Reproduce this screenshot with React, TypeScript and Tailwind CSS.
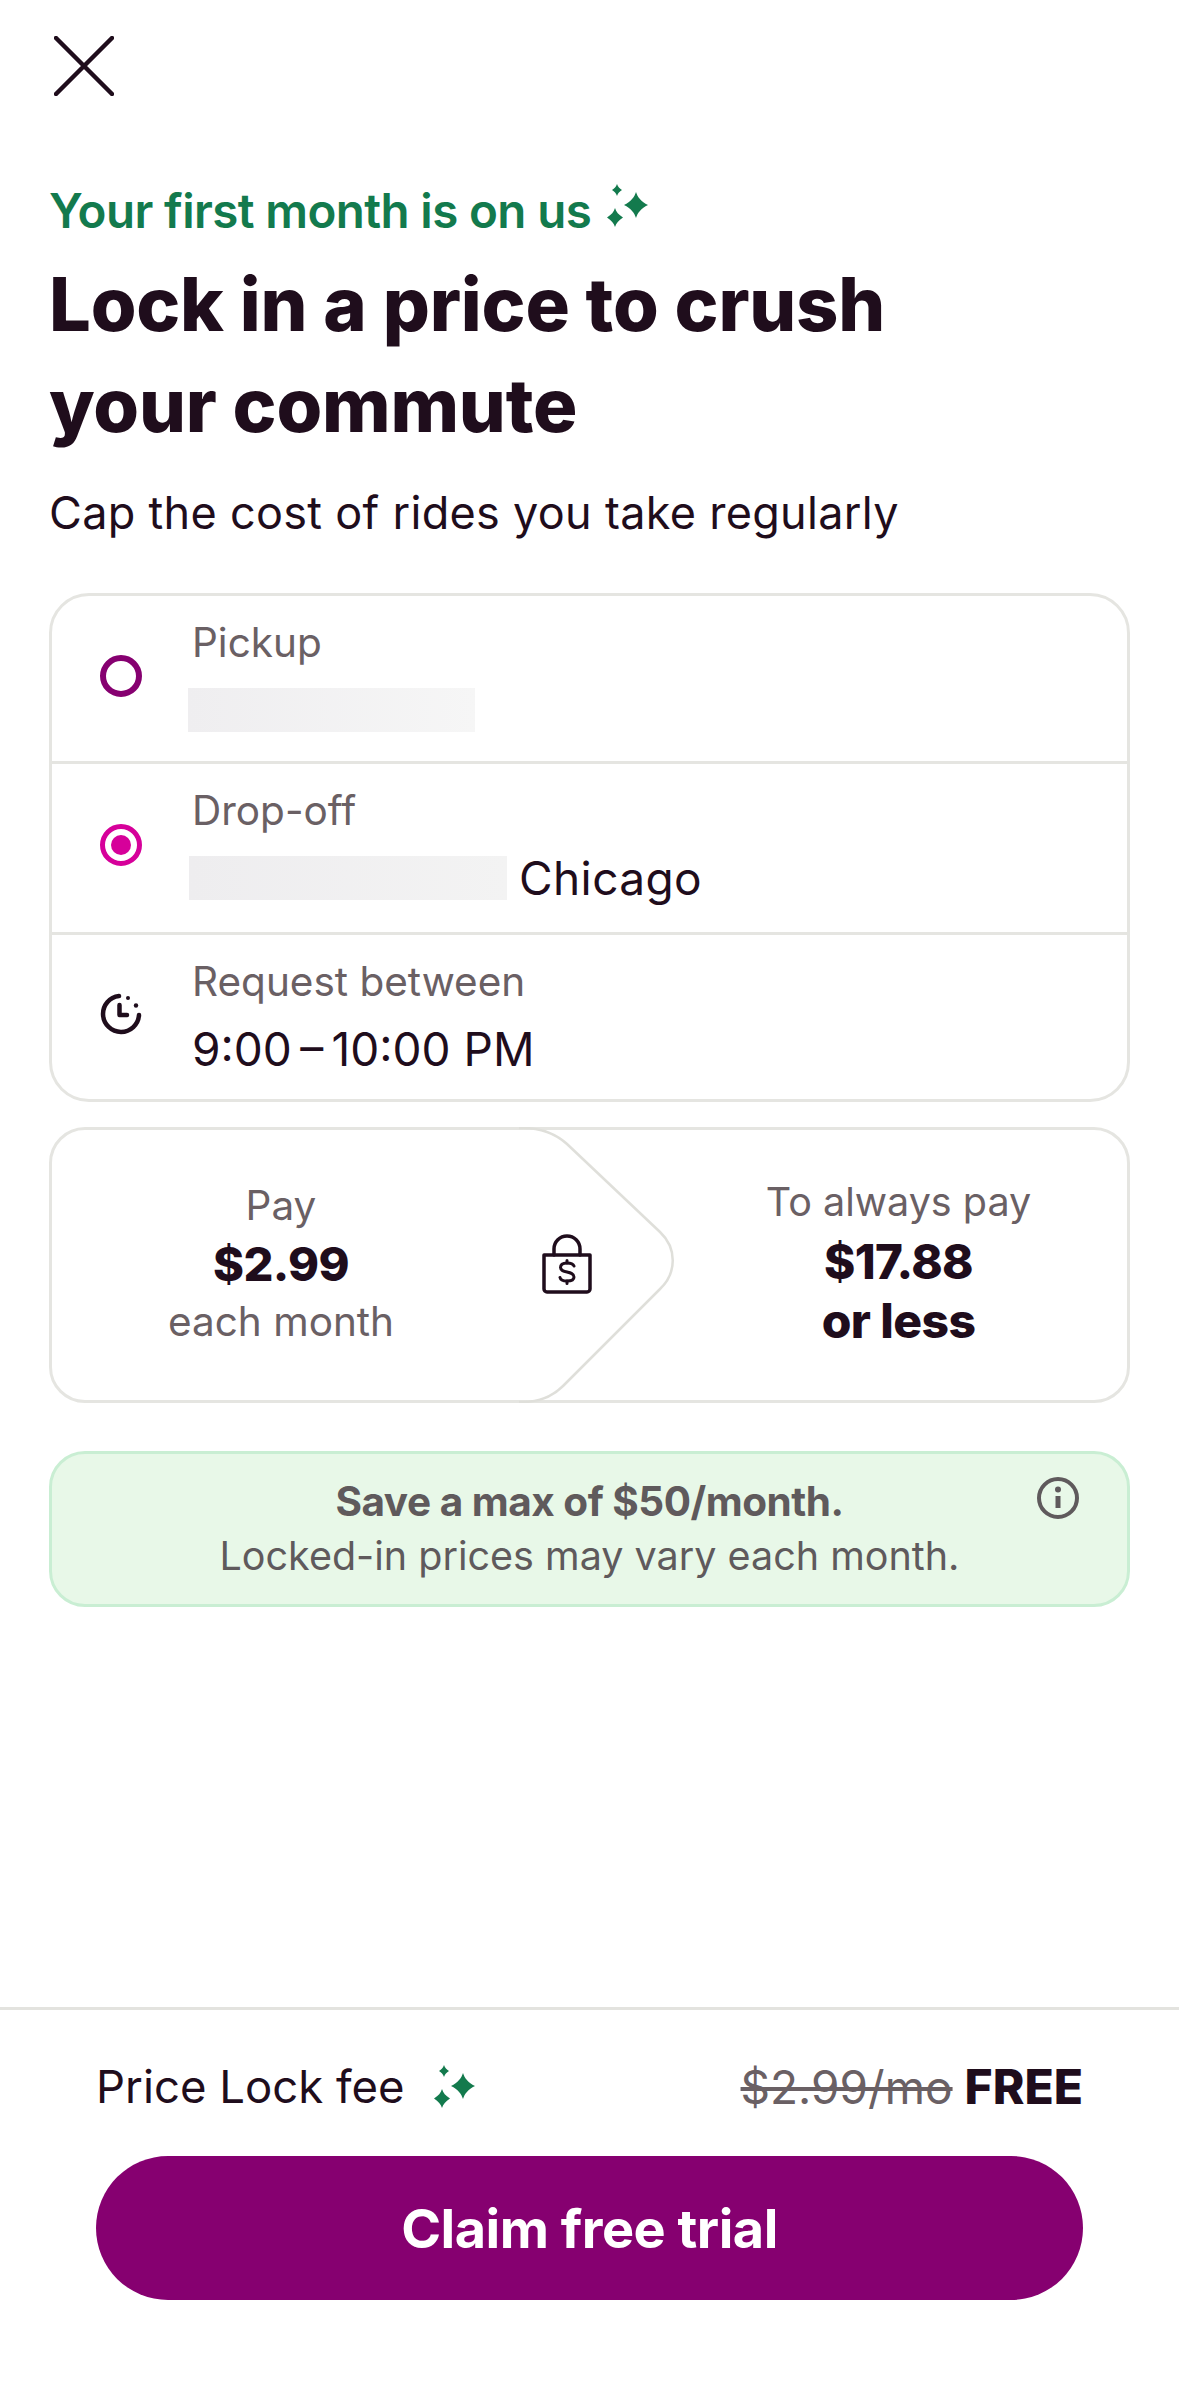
import React from 'react';

const Sparkles: React.FC<{ className?: string }> = ({ className }) => (
  <svg viewBox="0 0 44 44" className={className} fill="#137a4d">
    <path d="M12 0 C13 3 14.500 4.500 17 6 C14.500 7.500 13 9 12 12 C11 9 9.500 7.500 7 6 C9.500 4.500 11 3 12 0Z" />
    <path d="M31 8 C32.500 13 36 17.500 43 21 C36 24.500 32.500 29 31 34 C29.500 29 26 24.500 19 21 C26 17.500 29.500 13 31 8Z" />
    <path d="M10 24 C11.200 28 13.500 30.500 18 33.500 C13.500 36.500 11.200 39 10 43 C8.800 39 6.500 36.500 2 33.500 C6.500 30.500 8.800 28 10 24Z" />
  </svg>
);

const ClockIcon = () => (
  <svg viewBox="0 0 42 42" className="h-[42px] w-[42px]" fill="none" stroke="#1f0d1c" strokeWidth="4.500" strokeLinecap="round">
    <path d="M19 3 A18 18 0 1 0 39 22" />
    <path d="M19.500 12 V22 H27" strokeLinejoin="round" />
    <circle cx="28" cy="5" r="2" fill="#1f0d1c" stroke="none" />
    <circle cx="36" cy="12.500" r="2.200" fill="#1f0d1c" stroke="none" />
  </svg>
);

const LockDollarIcon = () => (
  <svg viewBox="0 0 50 60" className="h-[60px] w-[50px]" fill="none" stroke="#1f0d1c" strokeWidth="3.500" strokeLinejoin="round" strokeLinecap="round">
    <path d="M12 21 V15 A13 13 0 0 1 38 15 V21" />
    <path d="M2 21 H48 V55 A3 3 0 0 1 45 58 H5 A3 3 0 0 1 2 55Z" />
    <path d="M32 32 C31 29.500 29 29 25 29 C21 29 18.500 30.500 18.500 33.500 C18.500 39.500 32 36.500 32 43 C32 46 29 47 25 47 C21 47 18.500 46 18 43.500" strokeWidth="3" />
    <path d="M25 26.500 V29 M25 47 V49.500" strokeWidth="3" />
  </svg>
);

const InfoIcon = () => (
  <svg viewBox="0 0 42 42" className="h-[42px] w-[42px]" fill="none" stroke="#5f5a5c" strokeWidth="4">
    <circle cx="21" cy="21" r="19" />
    <path d="M21 19 V31" strokeWidth="5" />
    <circle cx="21" cy="12.500" r="3" fill="#5f5a5c" stroke="none" />
  </svg>
);

const Row: React.FC<{ icon: React.ReactNode; label: string; children: React.ReactNode; className: string }> = ({ icon, label, children, className }) => (
  <div className={`flex ${className}`}>
    <div className="flex w-[140px] items-center justify-center pb-[6px] pr-[2px]">{icon}</div>
    <div className="pt-[24px]">
      <div className="text-[40.500px] leading-[46px] text-[#6a6064]">{label}</div>
      <div className="mt-[21px] flex h-[46px] items-center text-[46px] text-[#1f0d1c]">{children}</div>
    </div>
  </div>
);

export default function App() {
  return (
    <div className="flex h-[2396px] w-[1179px] flex-col overflow-hidden bg-white font-['Inter',sans-serif] text-[#1f0d1c]">
      <div className="flex-1 px-[49px]">
        {/* Close */}
        <div className="pt-[36px]">
          <svg viewBox="0 0 60 60" className="ml-[5px] h-[60px] w-[60px]" stroke="#1f0d1c" strokeWidth="4.500" strokeLinecap="round">
            <path d="M2 2 L58 58 M58 2 L2 58" />
          </svg>
        </div>

        {/* Hero */}
        <div className="mt-[86px] flex h-[58px] items-center">
          <span className="text-[47.500px] font-semibold leading-[58px] tracking-[-0.6px] text-[#137a4d]">Your first month is on us</span>
          <Sparkles className="mb-[10px] ml-[14px] h-[44px] w-[44px]" />
        </div>
        <h1 className="mt-[14px] text-[74px] font-extrabold leading-[101px] tracking-[-0.2px]">
          Lock in a price to crush<br />your commute
        </h1>
        <p className="mt-[29px] text-[45px] leading-[56px] tracking-[0.3px]">Cap the cost of rides you take regularly</p>

        {/* Route */}
        <div className="mt-[52px] h-[509px] overflow-hidden rounded-[40px] border-[3px] border-[#e5e5e1]">
          <Row
            className="h-[168px] border-b-[3px] border-[#e5e5e1]"
            icon={<div className="h-[42px] w-[42px] rounded-full border-[6px] border-[#860070]" />}
            label="Pickup"
          >
            <div className="-ml-[4px] h-[44px] w-[287px] bg-gradient-to-r from-[#efeef0] to-[#f6f6f6]" />
          </Row>
          <Row
            className="h-[171px] border-b-[3px] border-[#e5e5e1]"
            icon={
              <div className="flex h-[42px] w-[42px] items-center justify-center rounded-full border-[5px] border-[#d6009a]">
                <div className="h-[20px] w-[20px] rounded-full bg-[#d6009a]" />
              </div>
            }
            label="Drop-off"
          >
            <div className="-ml-[3px] h-[44px] w-[318px] bg-gradient-to-r from-[#eeedef] to-[#f3f3f3]" />
            <span className="ml-[12px] tracking-[0.4px]">Chicago</span>
          </Row>
          <Row className="h-[164px]" icon={<ClockIcon />} label="Request between">
            <span>9:00{'\u2009'}–{'\u2009'}10:00 PM</span>
          </Row>
        </div>

        {/* Price comparison */}
        <div className="relative mt-[25px] grid h-[276px] grid-cols-[458px_1fr] rounded-[36px] border-[3px] border-[#e5e5e1]">
          <div className="flex flex-col items-center justify-center pb-[2px] text-center">
            <div className="text-[40.500px] leading-[58px] text-[#6a6064]">Pay</div>
            <div className="text-[47px] font-extrabold leading-[58px] tracking-[-0.6px]">$2.99</div>
            <div className="text-[40.500px] leading-[58px] text-[#6a6064]">each month</div>
          </div>
          <div className="flex flex-col items-center justify-center pb-[8px] pl-[160px] text-center">
            <div className="text-[39.500px] leading-[60px] text-[#6a6064]">To always pay</div>
            <div className="text-[47.500px] font-extrabold leading-[59px] tracking-[-0.6px]">$17.88</div>
            <div className="text-[48px] font-extrabold leading-[60px] tracking-[-0.6px]">or less</div>
          </div>
          <svg viewBox="0 0 160 276" className="absolute left-[467px] top-[-3px] h-[276px] w-[160px]" fill="none" stroke="#dfdfda" strokeWidth="2.500">
            <path d="M0 1 H4 C24 1 38 8 48 17 L141 105 C158 121 158 146 141 162 L44 259 C36 267 24 275 4 275 H0" />
          </svg>
          <div className="absolute left-[490px] top-[104px]">
            <LockDollarIcon />
          </div>
        </div>

        {/* Savings note */}
        <div className="relative mt-[48px] flex h-[156px] flex-col items-center justify-center rounded-[36px] border-[3px] border-[#c9eed3] bg-[#e8f8e8] text-center">
          <div className="text-[40.500px] font-bold leading-[55px] tracking-[-0.5px] text-[#5f5a5c]">Save a max of $50/month.</div>
          <div className="text-[39.500px] leading-[55px] text-[#5f5a5c]">Locked-in prices may vary each month.</div>
          <div className="absolute right-[48px] top-[23px]">
            <InfoIcon />
          </div>
        </div>
      </div>

      {/* Footer */}
      <div className="h-[389px] border-t-[3px] border-[#e3e3df] px-[96px]">
        <div className="mt-[49px] flex h-[56px] items-center justify-between">
          <div className="flex items-center">
            <span className="text-[45.500px]">Price Lock fee</span>
            <Sparkles className="ml-[27px] h-[44px] w-[44px]" />
          </div>
          <div className="flex items-center">
            <span className="text-[46px] text-[#6a6064] line-through">$2.99/mo</span>
            <span className="ml-[12px] text-[48px] font-extrabold">FREE</span>
          </div>
        </div>
        <button className="mt-[41px] flex h-[144px] w-[987px] items-center justify-center rounded-full bg-[#860070] text-[54px] font-bold tracking-[-0.5px] text-white">
          Claim free trial
        </button>
      </div>
    </div>
  );
}
